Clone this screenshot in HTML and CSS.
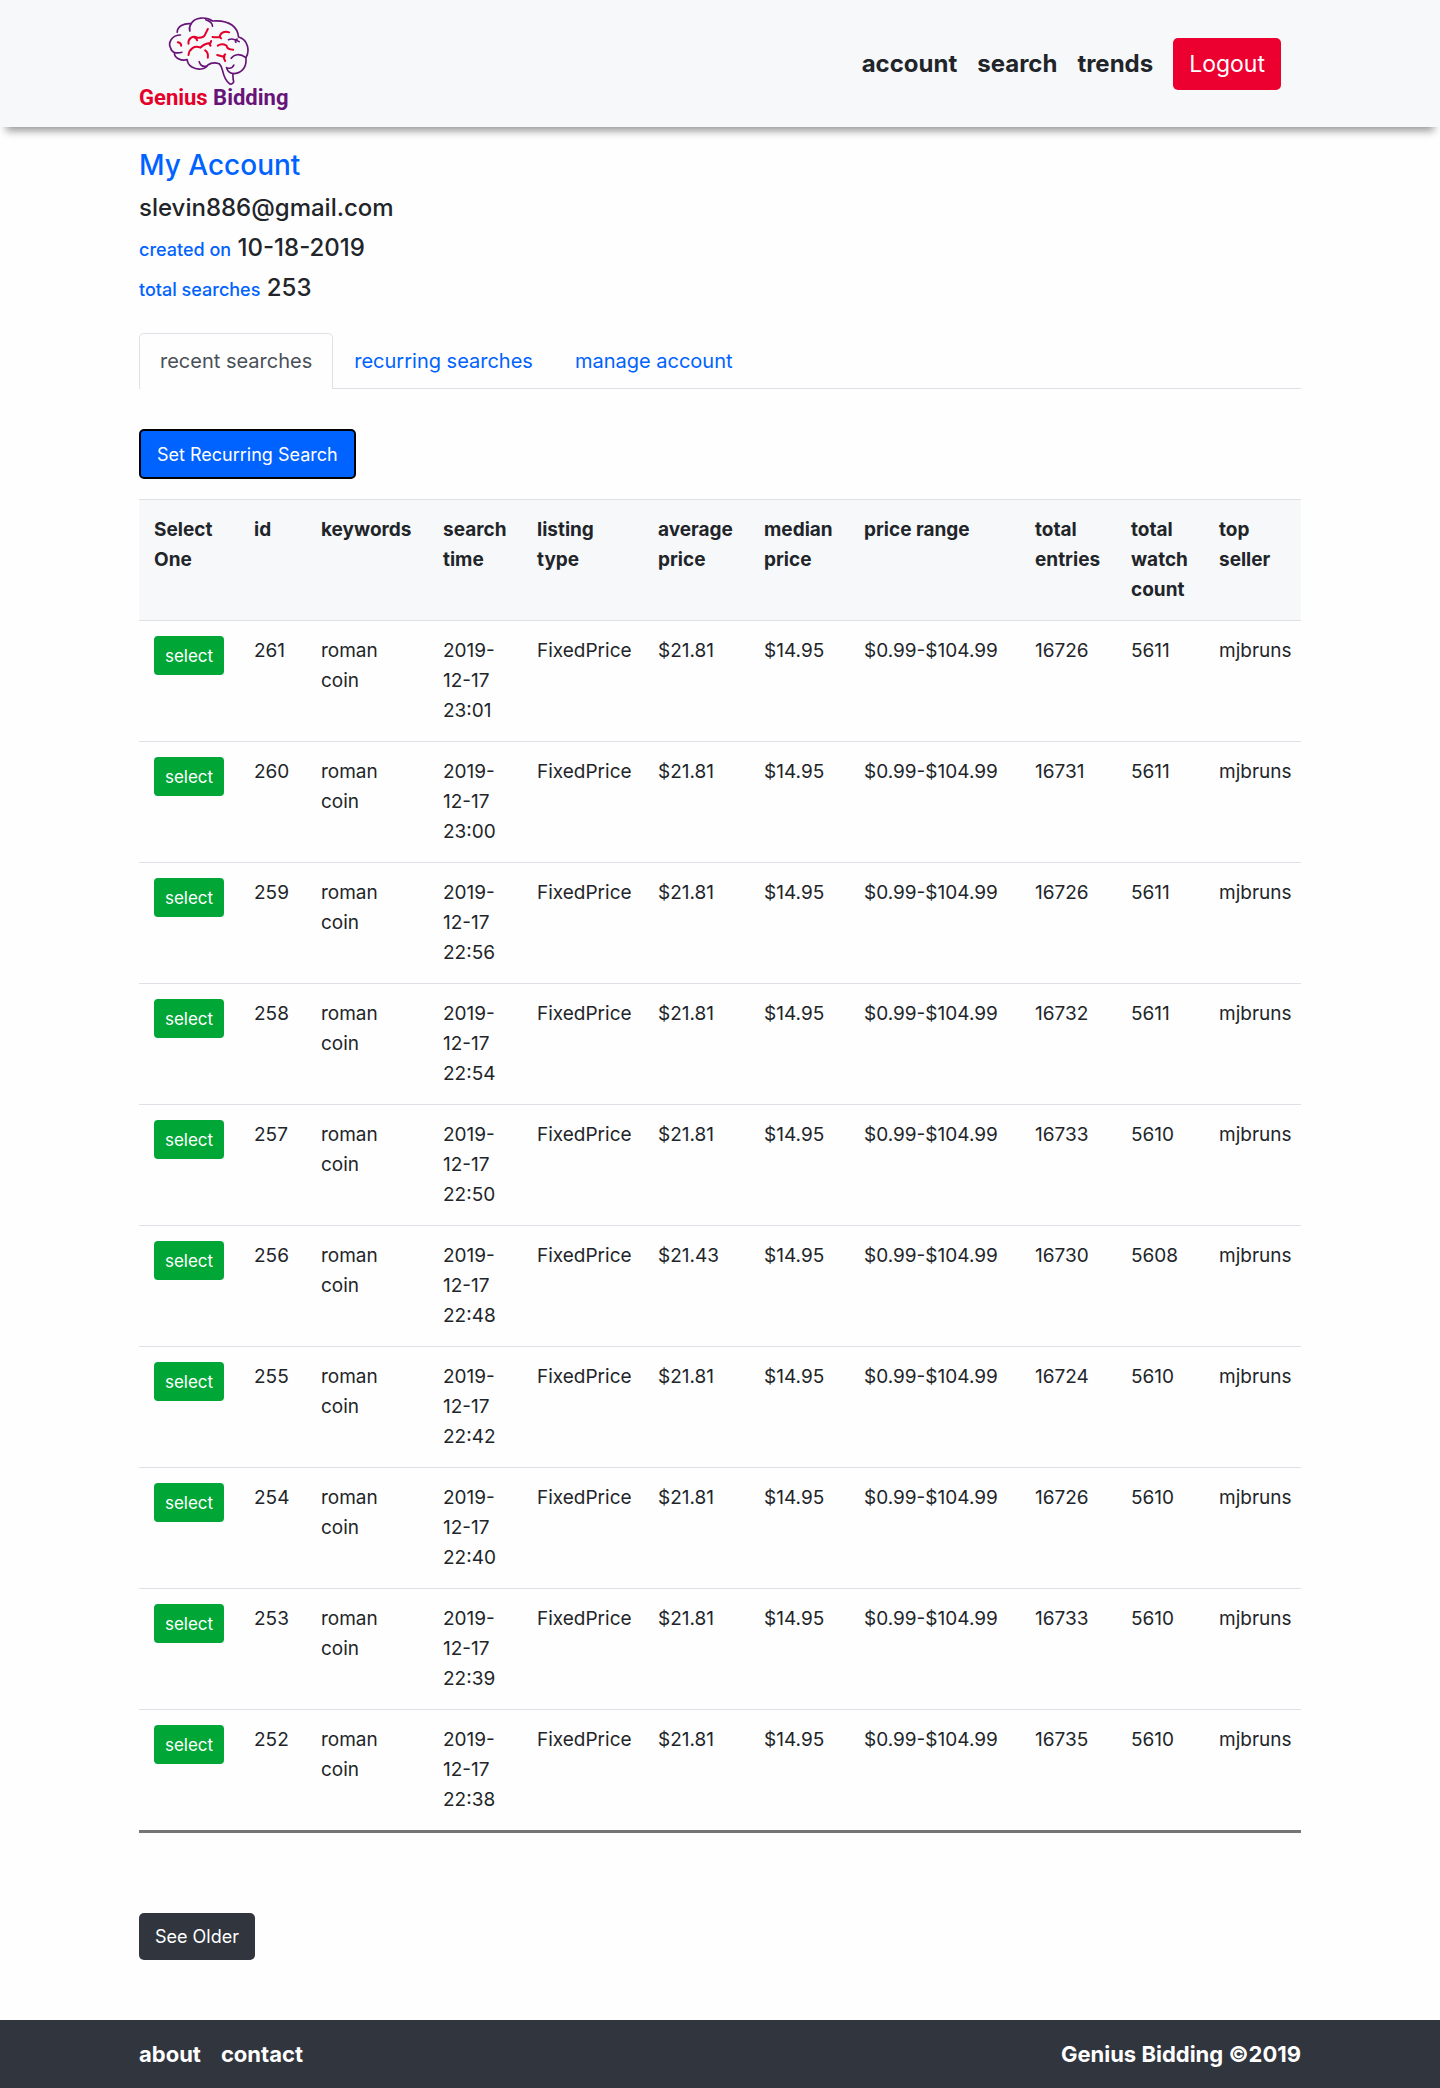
FILE: index.html
```html
<!DOCTYPE html>
<html lang="en">
<head>
<meta charset="utf-8">
<title>Genius Bidding</title>
<link rel="stylesheet" href="styles.css">
</head>
<body>
<header class="site-header">
  <div class="container header-inner">
    <a class="brand" href="#">
      <svg class="brand-mark" viewBox="0 0 240 204" fill="none" stroke-linecap="round" stroke-linejoin="round" aria-hidden="true">
        <g stroke="#671478" stroke-width="5">
          <path d="M36 54C10 54-2 78 6 92C8 102 12 105 18 107C16 122 38 133 56 128C58 148 78 158 98 156C112 154 116 148 118 144C126 138 140 136 152 140C158 146 160 152 162 160C166 178 174 194 184 201C192 203 198 196 194 188C194 180 192 174 194 170C216 170 236 154 232 122C244 104 240 68 210 60C208 34 188 8 132 12C114-2 78 0 68 20C46 18 26 28 26 46"/>
          <path d="M68 20C62 28 62 36 64 42M112 8C124 12 132 20 132 28M18 107C26 108 34 108 40 106M92 134C96 146 104 150 114 147M180 68Q194 62 212 74M206 66Q198 70 202 76M188 124C196 112 214 108 232 122M194 170C182 168 176 158 174 152M174 152Q190 158 196 144"/>
        </g>
        <g stroke="#e4002b" stroke-width="6">
          <path d="M60 80C58 66 72 54 86 62Q106 64 110 52L118 36M78 62Q84 64 86 70M132 60Q144 62 154 60C154 50 166 40 182 46M154 60L158 64M28 76Q38 78 38 86M60 114C62 96 78 84 96 92Q106 80 126 78L128 72M122 80L126 86M110 100Q120 106 118 122M148 86Q160 78 174 86Q176 98 194 98M146 114L168 120M170 112Q162 118 170 132"/>
        </g>
      </svg>
      <span class="brand-name"><span class="brand-first">Genius</span> Bidding</span>
    </a>
    <nav class="main-nav">
      <a href="#">account</a>
      <a href="#">search</a>
      <a href="#">trends</a>
      <button class="btn btn-logout" type="button">Logout</button>
    </nav>
  </div>
</header>
<main class="container main">
  <section class="profile">
    <h1>My Account</h1>
    <p>slevin886@gmail.com</p>
    <p><small>created on</small> 10-18-2019</p>
    <p><small>total searches</small> 253</p>
  </section>
  <nav class="tabs">
    <a class="tab tab-active" href="#">recent searches</a>
    <a class="tab" href="#">recurring searches</a>
    <a class="tab" href="#">manage account</a>
  </nav>
  <button class="btn btn-recurring" type="button">Set Recurring Search</button>
  <table class="searches">
    <colgroup>
      <col class="c-select"><col class="c-id"><col class="c-keywords"><col class="c-time"><col class="c-type"><col class="c-average"><col class="c-median"><col class="c-range"><col class="c-entries"><col class="c-watch"><col class="c-seller">
    </colgroup>
    <thead>
      <tr><th>Select One</th><th>id</th><th>keywords</th><th>search time</th><th>listing type</th><th>average price</th><th>median price</th><th>price range</th><th>total entries</th><th>total watch count</th><th>top seller</th></tr>
    </thead>
    <tbody>
      <tr><td><button class="btn btn-select" type="button">select</button></td><td>261</td><td>roman coin</td><td>2019-12-17 23:01</td><td>FixedPrice</td><td>$21.81</td><td>$14.95</td><td class="range">$0.99-$104.99</td><td>16726</td><td>5611</td><td>mjbruns</td></tr>
      <tr><td><button class="btn btn-select" type="button">select</button></td><td>260</td><td>roman coin</td><td>2019-12-17 23:00</td><td>FixedPrice</td><td>$21.81</td><td>$14.95</td><td class="range">$0.99-$104.99</td><td>16731</td><td>5611</td><td>mjbruns</td></tr>
      <tr><td><button class="btn btn-select" type="button">select</button></td><td>259</td><td>roman coin</td><td>2019-12-17 22:56</td><td>FixedPrice</td><td>$21.81</td><td>$14.95</td><td class="range">$0.99-$104.99</td><td>16726</td><td>5611</td><td>mjbruns</td></tr>
      <tr><td><button class="btn btn-select" type="button">select</button></td><td>258</td><td>roman coin</td><td>2019-12-17 22:54</td><td>FixedPrice</td><td>$21.81</td><td>$14.95</td><td class="range">$0.99-$104.99</td><td>16732</td><td>5611</td><td>mjbruns</td></tr>
      <tr><td><button class="btn btn-select" type="button">select</button></td><td>257</td><td>roman coin</td><td>2019-12-17 22:50</td><td>FixedPrice</td><td>$21.81</td><td>$14.95</td><td class="range">$0.99-$104.99</td><td>16733</td><td>5610</td><td>mjbruns</td></tr>
      <tr><td><button class="btn btn-select" type="button">select</button></td><td>256</td><td>roman coin</td><td>2019-12-17 22:48</td><td>FixedPrice</td><td>$21.43</td><td>$14.95</td><td class="range">$0.99-$104.99</td><td>16730</td><td>5608</td><td>mjbruns</td></tr>
      <tr><td><button class="btn btn-select" type="button">select</button></td><td>255</td><td>roman coin</td><td>2019-12-17 22:42</td><td>FixedPrice</td><td>$21.81</td><td>$14.95</td><td class="range">$0.99-$104.99</td><td>16724</td><td>5610</td><td>mjbruns</td></tr>
      <tr><td><button class="btn btn-select" type="button">select</button></td><td>254</td><td>roman coin</td><td>2019-12-17 22:40</td><td>FixedPrice</td><td>$21.81</td><td>$14.95</td><td class="range">$0.99-$104.99</td><td>16726</td><td>5610</td><td>mjbruns</td></tr>
      <tr><td><button class="btn btn-select" type="button">select</button></td><td>253</td><td>roman coin</td><td>2019-12-17 22:39</td><td>FixedPrice</td><td>$21.81</td><td>$14.95</td><td class="range">$0.99-$104.99</td><td>16733</td><td>5610</td><td>mjbruns</td></tr>
      <tr><td><button class="btn btn-select" type="button">select</button></td><td>252</td><td>roman coin</td><td>2019-12-17 22:38</td><td>FixedPrice</td><td>$21.81</td><td>$14.95</td><td class="range">$0.99-$104.99</td><td>16735</td><td>5610</td><td>mjbruns</td></tr>
    </tbody>
  </table>
  <button class="btn btn-older" type="button">See Older</button>
</main>
<footer class="site-footer">
  <div class="container footer-inner">
    <nav class="footer-nav">
      <a href="#">about</a>
      <a href="#">contact</a>
    </nav>
    <span>Genius Bidding ©2019</span>
  </div>
</footer>
</body>
</html>
```
FILE: styles.css
```css
* {
  box-sizing: border-box;
}

body {
  margin: 0;
  min-height: 100vh;
  display: flex;
  flex-direction: column;
  background: #fefefe;
  color: #212529;
  font-family: Inter, "Liberation Sans", sans-serif;
  font-size: 19px;
  line-height: 30px;
}

a {
  color: inherit;
  text-decoration: none;
}

.container {
  width: 100%;
  max-width: 1162px;
  margin: 0 auto;
}

.btn {
  border: 0;
  border-radius: 5px;
  padding: 0 16px;
  color: #fff;
  font-family: inherit;
  font-size: 18px;
  white-space: nowrap;
  cursor: pointer;
}

/* Header */
.site-header {
  background: #f7f8fa;
  box-shadow: 0 10px 8px -6px #999;
}

.header-inner {
  display: flex;
  justify-content: space-between;
  align-items: center;
  height: 127px;
  padding-right: 20px;
}

.brand {
  display: flex;
  flex-direction: column;
  width: 150px;
}

.brand-mark {
  width: 81px;
  height: 68px;
  margin-left: 29px;
}

.brand-name {
  color: #671478;
  font-family: Roboto, "Liberation Sans", sans-serif;
  font-size: 22px;
  font-weight: 700;
  line-height: 26px;
  white-space: nowrap;
}

.brand-first {
  color: #e4002b;
}

.main-nav {
  display: flex;
  align-items: center;
  gap: 20px;
  font-size: 24px;
  font-weight: 700;
}

.btn-logout {
  height: 52px;
  background: #eb002f;
  font-size: 23px;
}

/* Profile */
.main {
  flex: 1 0 auto;
  display: flex;
  flex-direction: column;
  align-items: flex-start;
  padding: 18px 0 60px;
}

.profile h1,
.profile p {
  margin: 0;
  font-weight: 500;
  line-height: 40px;
}

.profile h1 {
  margin-bottom: 3px;
  color: #0062ff;
  font-size: 28px;
}

.profile p {
  font-size: 24px;
}

.profile small {
  color: #0062ff;
  font-size: 18px;
  line-height: 20px;
}

/* Tabs */
.tabs {
  display: flex;
  align-self: stretch;
  margin-top: 25px;
  border-bottom: 1px solid #dee2e6;
  color: #0062ff;
  font-size: 20px;
}

.tab {
  margin-bottom: -1px;
  padding: 11px 20px;
  border: 1px solid transparent;
  border-bottom: 0;
  border-radius: 5px 5px 0 0;
  line-height: 33px;
}

.tab-active {
  background: #fefefe;
  border-color: #dee2e6;
  color: #495057;
}

.btn-recurring {
  height: 50px;
  margin: 40px 0 20px;
  border: 2px solid #000;
  background: #0062ff;
}

/* Results table */
.searches {
  width: 100%;
  table-layout: fixed;
  border-spacing: 0;
  border-bottom: 3px solid #757575;
}

.searches th,
.searches td {
  padding: 15px 0 15px 15px;
  border-top: 1px solid #dee2e6;
  text-align: left;
  vertical-align: top;
}

.searches th {
  padding-right: 10px;
  background: #f7f8fa;
  font-weight: 700;
}

.searches td:nth-child(3),
.searches td:nth-child(4) {
  padding-right: 25px;
}

.searches .range {
  white-space: nowrap;
}

.c-select { width: 100px; }
.c-id { width: 67px; }
.c-keywords { width: 122px; }
.c-time { width: 94px; }
.c-type { width: 121px; }
.c-average { width: 106px; }
.c-median { width: 100px; }
.c-range { width: 171px; }
.c-entries { width: 96px; }
.c-watch { width: 88px; }
.c-seller { width: 97px; }

.btn-select {
  display: block;
  width: 70px;
  height: 39px;
  padding: 0;
  border-radius: 4px;
  background: #00a636;
  font-size: 17px;
}

.btn-older {
  height: 47px;
  margin-top: 80px;
  background: #31353d;
}

/* Footer */
.site-footer {
  background: #31353d;
  color: #fff;
  font-size: 22px;
  font-weight: 700;
}

.footer-inner {
  display: flex;
  justify-content: space-between;
  align-items: center;
  height: 68px;
}

.footer-nav {
  display: flex;
  gap: 20px;
}
```
